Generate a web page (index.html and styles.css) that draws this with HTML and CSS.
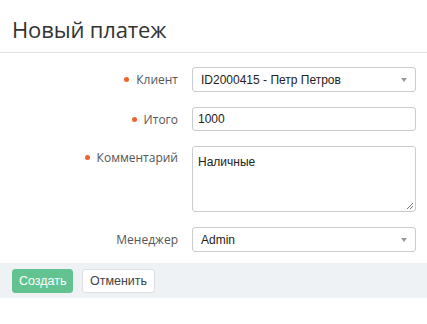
FILE: index.html
```html
<!DOCTYPE html>
<html lang="ru">
<head>
<meta charset="utf-8">
<link rel="stylesheet" href="styles.css">
</head>
<body>
<div class="header"><h1 class="title">Новый платеж</h1></div>
<form class="form">
  <div class="row">
    <label class="label req">Клиент</label>
    <div class="control select"><span>ID2000415 - Петр Петров</span><i class="caret"></i></div>
  </div>
  <div class="row">
    <label class="label req">Итого</label>
    <div class="control input">1000</div>
  </div>
  <div class="row row-top">
    <label class="label req">Комментарий</label>
    <div class="control textarea">Наличные
      <svg class="grip" width="9" height="9" viewBox="0 0 9 9"><path d="M8 2 L2 8 M8 5 L5 8" stroke="#777" stroke-width="1"/></svg>
    </div>
  </div>
  <div class="row">
    <label class="label">Менеджер</label>
    <div class="control select"><span>Admin</span><i class="caret"></i></div>
  </div>
</form>
<div class="footer">
  <button class="btn btn-primary" type="button">Создать</button>
  <button class="btn btn-default" type="button">Отменить</button>
</div>
</body>
</html>
```
FILE: styles.css
```css
html, body { margin: 0; padding: 0; background: #fff; }
body { font-family: "Open Sans", sans-serif; color: #333; }
.header { height: 52px; border-bottom: 1px solid #dde2e8; display: flex; align-items: center; padding-left: 12px; }
.title { margin: 0; font-size: 22px; font-weight: 400; color: #333; line-height: 1; padding-top: 6px; letter-spacing: -0.15px; }
.form { padding: 14px 11px 0 0; display: flex; flex-direction: column; gap: 15px; }
.row { display: flex; align-items: center; }
.row-top { align-items: flex-start; }
.label { width: 192px; flex: none; text-align: right; font-size: 12px; color: #555; padding-right: 14px; box-sizing: border-box; position: relative; }
.row-top .label { padding-top: 3px; }
.req::before { content: ""; display: inline-block; width: 5px; height: 5px; border-radius: 50%; background: #f0622d; margin-right: 7px; vertical-align: middle; position: relative; top: -1px; }
.control { flex: 1; box-sizing: border-box; border: 1px solid #c8ccd0; border-radius: 3px; font-family: "Liberation Sans", Arial, sans-serif; font-size: 12px; color: #222; display: flex; align-items: center; position: relative; }
.select { height: 25px; padding-left: 8px; justify-content: space-between; padding-right: 8px; }
.input { height: 24px; padding-left: 5px; }
.textarea { height: 66px; align-items: flex-start; padding: 8px 5px; }
.grip { position: absolute; right: 1px; bottom: 1px; }
.caret { width: 0; height: 0; border-left: 3px solid transparent; border-right: 3px solid transparent; border-top: 4px solid #999; }
.footer { margin-top: 11px; height: 35px; background: #eef2f5; display: flex; align-items: center; padding-left: 12px; gap: 9px; }
.btn { height: 24px; border-radius: 3px; font-family: "Liberation Sans", Arial, sans-serif; font-size: 12.5px; padding: 0 6px; cursor: pointer; }
.btn-primary { background: #62c391; border: 1px solid #62c391; color: #fff; width: 61px; }
.btn-default { background: #fff; border: 1px solid #dcdfe3; color: #444; width: 73px; }
```
